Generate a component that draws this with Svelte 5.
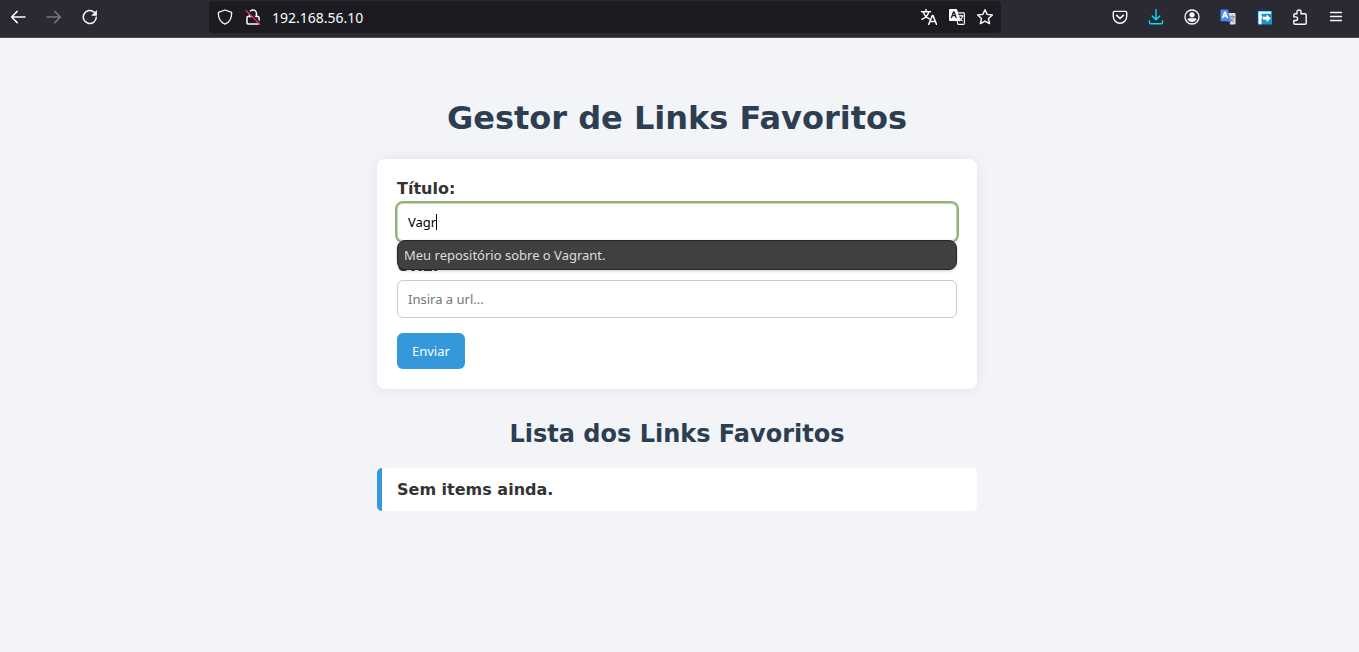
<script>
  let title = $state('Vagr');
  let url = $state('');
  let address = $state('192.168.56.10');
  const suggestions = ['Meu repositório sobre o Vagrant.'];
</script>

<header class="toolbar">
  <nav class="group" aria-label="Navegação">
    <button class="tool" aria-label="Voltar">
      <svg viewBox="0 0 16 16"><path d="M15 8H1.8M7.2 2.4 1.6 8l5.6 5.6" stroke-width="1.5" /></svg>
    </button>
    <button class="tool" aria-label="Avançar" disabled>
      <svg viewBox="0 0 16 16"><path d="M1 8h13.2M8.8 2.4 14.4 8l-5.6 5.6" stroke-width="1.5" /></svg>
    </button>
    <button class="tool" aria-label="Recarregar">
      <svg viewBox="0 0 16 16"><path d="M14.3 8.3A6.5 6.5 0 1 1 12.2 3.2" stroke-width="1.5" /><path class="solid" d="M14.9 1v5.3a.5.5 0 0 1-.5.5H9.2z" /></svg>
    </button>
  </nav>

  <div class="address">
    <button class="small" aria-label="Proteção">
      <svg viewBox="0 0 16 16"><path d="M8 1 14 3.2c.5.2.7.5.7 1C14.6 9.6 12.5 13.3 8 15.2 3.5 13.3 1.4 9.6 1.3 4.2c0-.5.2-.8.7-1z" stroke-width="1.3" /></svg>
    </button>
    <button class="small" aria-label="Conexão não segura">
      <svg viewBox="0 0 16 16"><path d="M4.5 7.5V4.500a3.500 3.500 0 0 1 7 0v3M3 7.500h10q1 0 1 1V14q0 1-1 1H3q-1 0-1-1V8.500q0-1 1-1z" stroke-width="1.5" /><path d="M2 .6 15.800 14.400" stroke="#1c1b22" stroke-width="1.600" /><path d="M1 1.400 14.800 15.200" stroke="#e22850" stroke-width="1.400" /></svg>
    </button>
    <input class="location" aria-label="Endereço" bind:value={address} />
    <button class="small" aria-label="Traduzir página">
      <svg viewBox="0 0 16 16"><path d="M.5 2.7h9M5 .6v2M2.3 2.9c.8 3.1 3 5.5 6 7M7.8 2.9c-.9 3.5-3.5 6-6.8 7.4M7.7 15.4l3.700-9h.5l3.700 9M9 12.400h5.300" stroke-width="1.500" /></svg>
    </button>
    <button class="small" aria-label="Tradutor">
      <svg viewBox="0 0 16 16"><path class="solid" d="M1 0h6.3q.7 0 .9.7L11.300 12H1q-1 0-1-1V1q0-1 1-1z" /><path d="m2.500 8.500 2-5.500h.6l2 5.500M3.200 6.700h3.300" stroke="#1c1b22" stroke-width="1.300" /><path d="M9 3.900h5.500q.9 0 .9.900v9.700q0 .9-.9.900H9l-.9-3.200M9.800 6.900h4.400M12 6v1M10.300 8.700c.7 1.400 1.700 2.400 3 3.200M13.600 7.100c-.3 2-1.300 3.600-3 4.800" stroke-width="1.100" /></svg>
    </button>
    <button class="small" aria-label="Favoritar">
      <svg viewBox="0 0 16 16"><path d="m8 .7 2.200 4.700 5.200.6-3.900 3.500 1.100 5.100L8 12.100l-4.600 2.500 1.100-5.100L.6 6l5.200-.6z" stroke-width="1.400" /></svg>
    </button>
  </div>

  <div class="group">
    <button class="tool" aria-label="Pocket">
      <svg viewBox="0 0 16 16"><path d="M2.500 2.400h11q1.200 0 1.200 1.200v3.900a6.700 6.700 0 0 1-13.400 0V3.600q0-1.200 1.200-1.200z" stroke-width="1.400" /><path d="M4.700 6.400 8 9.500l3.300-3.100" stroke-width="1.600" /></svg>
    </button>
    <button class="tool accent" aria-label="Downloads">
      <svg viewBox="0 0 16 16"><path d="M8 .5v10.300M4.200 7 8 10.800 11.800 7M1.500 12v1.400q0 1.300 1.300 1.300h10.400q1.300 0 1.300-1.300V12" stroke-width="1.400" /></svg>
    </button>
    <button class="tool" aria-label="Conta">
      <svg viewBox="0 0 16 16"><circle cx="8" cy="8" r="7" stroke-width="1.300" /><circle class="solid" cx="8" cy="5.800" r="2.600" /><path class="solid" d="M4.800 9.200h6.400q1 0 1 1C11.500 12 9.900 13 8 13s-3.500-1-4.200-2.800q0-1 1-1z" /></svg>
    </button>
    <button class="tool" aria-label="Google Tradutor">
      <svg viewBox="0 0 16 16"><path d="M8 4h6.500q1 0 1 1v9.500q0 1-1 1H10z" fill="#dddde1" stroke="none" /><path d="M9.900 7.800h4.500M12.200 6.700v1M10.700 9.600q1.200 2 3 3M13.800 8.100q-.5 2.700-3 4.200" stroke="#73879b" stroke-width="1" /><path d="M7.300 12.200h3.300l-.9 3.300z" fill="#2854b8" stroke="none" /><path d="M1.500.5h5.600q.7 0 .9.700l3 11H1.500q-1 0-1-1V1.500q0-1 1-1z" fill="#4c8bf5" stroke="none" /><path d="m2.700 8.600 2-5.300h.6l2 5.300M3.400 6.900h3.200" stroke="#fff" stroke-width="1.500" /></svg>
    </button>
    <button class="tool" aria-label="Extensão">
      <svg viewBox="0 0 16 16"><path d="M.5.500h14v14H.5z" fill="#063b72" stroke="none" /><path d="M2 2h14v13.500H2z" fill="#109bd0" stroke="none" /><path d="M2.500 2.500H15v2.300H5.500v2.500h3v2.500h-3v5.400h-3z" fill="#fff" stroke="none" /><path d="M6.800 7.700h3.700V5.400L15 9.300l-4.500 3.900v-2.400H6.800z" fill="#fff" stroke="#0871ad" stroke-width=".8" paint-order="stroke" /></svg>
    </button>
    <button class="tool" aria-label="Extensões">
      <svg viewBox="0 0 16 16"><path d="M5 4.800V3a2 2 0 0 1 4 0v1.800h4q1.200 0 1.200 1.200v8q0 1.200-1.200 1.200H3q-1.200 0-1.200-1.200v-2.500h2a1.800 1.800 0 0 0 0-3.600h-2V6q0-1.200 1.200-1.200z" stroke-width="1.400" /></svg>
    </button>
    <button class="tool" aria-label="Menu">
      <svg viewBox="0 0 16 16"><path d="M2.500 3.500h11M2.500 7.500h11M2.500 11.500h11" stroke-width="1.300" /></svg>
    </button>
  </div>
</header>

<main>
  <h1>Gestor de Links Favoritos</h1>

  <form class="card" onsubmit={(e) => e.preventDefault()}>
    <label for="title">Título:</label>
    <div class="field">
      <input id="title" class="text active" autocomplete="off" bind:value={title} />
      <span class="caret"></span>
      <ul class="suggestions">
        {#each suggestions as item}
          <li>{item}</li>
        {/each}
      </ul>
    </div>
    <label for="url">URL:</label>
    <div class="field">
      <input id="url" class="text" placeholder="Insira a url..." bind:value={url} />
    </div>
    <button class="submit">Enviar</button>
  </form>

  <h2>Lista dos Links Favoritos</h2>
  <ul class="links">
    <li>Sem items ainda.</li>
  </ul>
</main>

<style>
  :global(body) {
    margin: 0;
    background: #f2f4f8;
    color: #333;
    font: 16px/19px "DejaVu Sans", sans-serif;
  }

  button,
  input {
    box-sizing: border-box;
    margin: 0;
    border: 0;
    font-family: "Noto Sans", sans-serif;
  }

  ul {
    margin: 0;
    padding: 0;
    list-style: none;
  }

  .toolbar {
    display: flex;
    box-sizing: border-box;
    height: 38px;
    padding: 1px 5px 4px 0;
    border-bottom: 1px solid #4a4953;
    background: #2b2a33;
    color: #fbfbfe;
  }

  .group {
    display: flex;
  }

  .tool,
  .small {
    display: flex;
    align-items: center;
    justify-content: center;
    flex: none;
    width: 36px;
    padding: 0;
    background: none;
    color: inherit;
  }

  .small {
    width: 28px;
  }

  .tool:disabled {
    color: #77767d;
  }

  .tool.accent {
    color: #00ddff;
  }

  svg {
    width: 16px;
    height: 16px;
    fill: none;
    stroke: currentColor;
    stroke-linecap: round;
    stroke-linejoin: round;
  }

  .solid {
    fill: currentColor;
    stroke: none;
  }

  .address {
    display: flex;
    flex: 0 1 792px;
    box-sizing: border-box;
    min-width: 0;
    margin: 0 auto;
    padding: 0 2px;
    border-radius: 4px;
    background: #1c1b22;
  }

  .location {
    flex: 1;
    min-width: 0;
    padding: 0 5px;
    background: none;
    color: #fbfbfe;
    font-size: 14px;
    outline: 0;
  }

  main {
    max-width: 600px;
    margin: 0 auto;
    padding: 60px 5px 20px 0;
  }

  h1,
  h2 {
    margin: 0;
    color: #2c3e50;
    text-align: center;
  }

  h1 {
    margin-bottom: 21px;
    font-size: 32px;
    line-height: 40px;
  }

  h2 {
    margin: 31px 0 20px;
    font-size: 24px;
    line-height: 28px;
  }

  .card {
    padding: 20px;
    border-radius: 8px;
    background: #fff;
    box-shadow: 0 0 15px rgba(0, 0, 0, 0.07);
  }

  label {
    display: block;
    margin-bottom: 5px;
    font-weight: bold;
  }

  .field {
    position: relative;
    margin-bottom: 15px;
  }

  .text {
    display: block;
    width: 100%;
    height: 38px;
    padding: 10px;
    border: 1px solid #ccc;
    border-radius: 6px;
    background: #fff;
    color: #000;
    font-size: 13px;
  }

  .text::placeholder {
    color: #757575;
  }

  .text.active {
    outline: 2px solid #92b372;
    outline-offset: 0;
    caret-color: transparent;
  }

  .caret {
    position: absolute;
    top: 11px;
    left: 39px;
    width: 1px;
    height: 16px;
    background: #000;
  }

  .suggestions {
    position: absolute;
    top: 37px;
    right: 0;
    left: 0;
    border: 1px solid #262626;
    border-radius: 8px;
    background: #404040;
    box-shadow: 0 1px 3px rgba(0, 0, 0, 0.2);
    color: #ddd;
    font: 13px/28px "Noto Sans", sans-serif;
  }

  .suggestions li {
    padding: 0 6px;
  }

  .submit {
    display: block;
    height: 36px;
    padding: 0 15px;
    border-radius: 6px;
    background: #3498db;
    color: #fff;
    font-size: 13px;
  }

  .links li {
    padding: 12px 15px;
    border-left: 5px solid #3498db;
    border-radius: 5px;
    background: #fff;
    font-weight: bold;
  }
</style>
